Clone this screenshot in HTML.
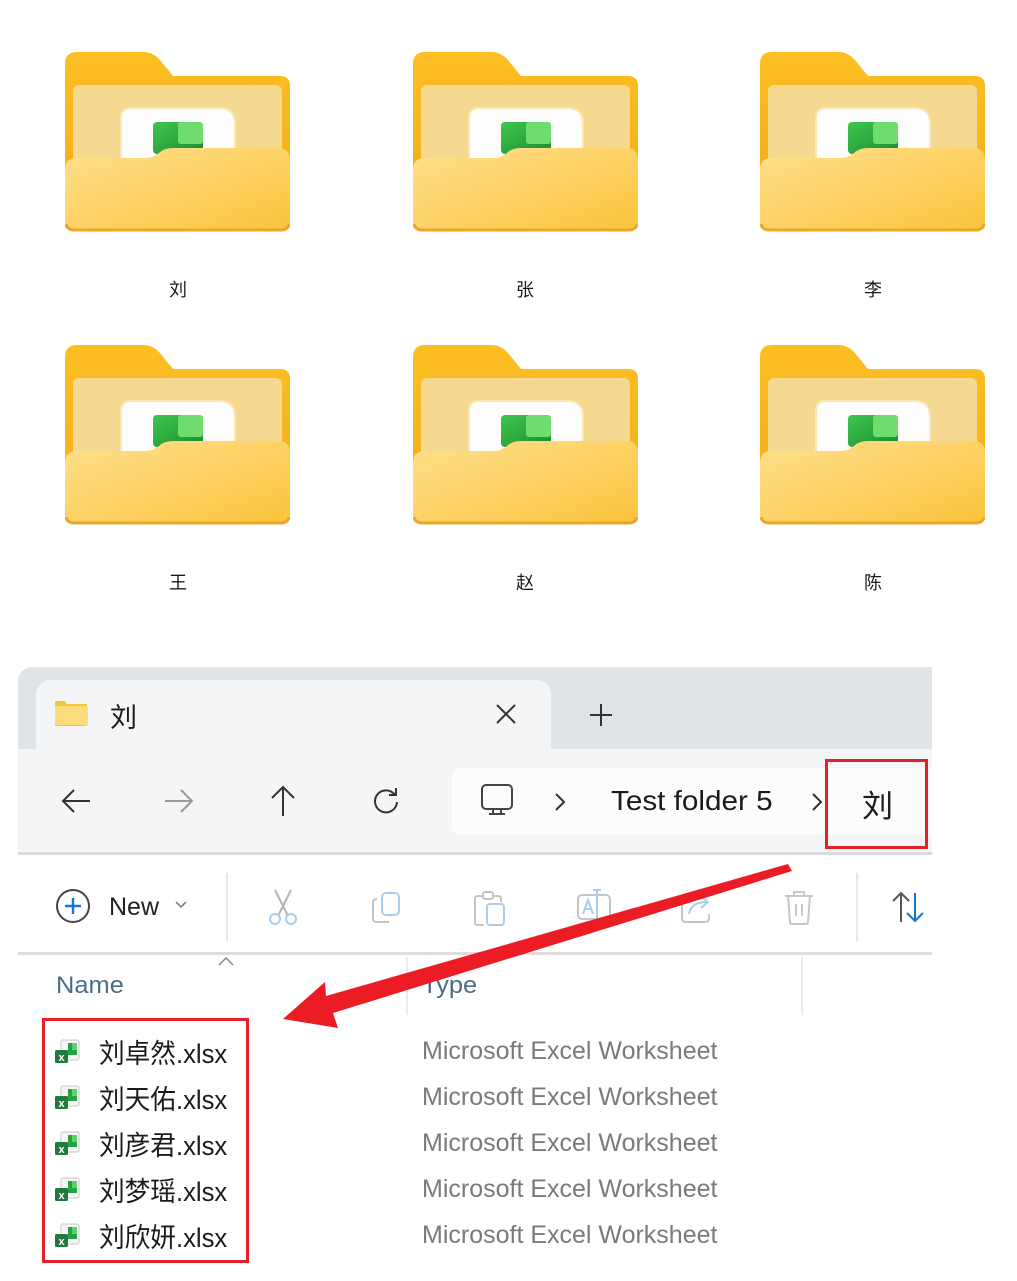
<!DOCTYPE html>
<html><head><meta charset="utf-8"><style>
*{margin:0;padding:0;box-sizing:border-box}
body{width:1017px;height:1281px;background:#fff;position:relative;overflow:hidden;font-family:"Liberation Sans","Noto Sans CJK SC",sans-serif;color:#1b1b1b}
.a{position:absolute}
.lbl{position:absolute;font-size:18px;width:100px;text-align:center;margin-left:-50px}
.sx{display:inline-block;transform-origin:left center;white-space:nowrap}
.type{position:absolute;left:422px;font-size:25px;color:#7a7a7a}
</style></head><body>
<svg width="0" height="0" style="position:absolute"><defs>
<linearGradient id="fb" x1="0" y1="0" x2="0" y2="1"><stop offset="0" stop-color="#fcbf22"/><stop offset="1" stop-color="#f2a91a"/></linearGradient>
<linearGradient id="ff" x1="0" y1="0" x2="1" y2="1"><stop offset="0" stop-color="#ffe08e"/><stop offset="1" stop-color="#fcc43c"/></linearGradient>
<linearGradient id="gr" x1="0" y1="0" x2="1" y2="1"><stop offset="0" stop-color="#3fc74f"/><stop offset="1" stop-color="#1d8a2f"/></linearGradient>
<g id="folder">
<path d="M0,12 Q0,0 12,0 H78 Q88,0 95,8 L108,24 H215 Q225,24 225,34 V168 Q225,178 215,178 H10 Q0,178 0,168 Z" fill="url(#fb)"/>
<rect x="8" y="33" width="209" height="110" rx="6" fill="#f6d991"/>
<path d="M56,66 Q56,56 66,56 H155 Q170,56 170,72 V125 H56 Z" fill="#fdfdfd" stroke="#fbe7b4" stroke-width="2"/>
<rect x="88" y="70" width="50" height="32" rx="4" fill="url(#gr)"/>
<rect x="113" y="70" width="25" height="22" rx="3" fill="#6fdc6e"/>
<path d="M0,118 Q0,106 12,106 H80 Q88,106 94,101 Q99,96 108,96 H213 Q225,96 225,108 V168 Q225,178 213,178 H12 Q0,178 0,168 Z" fill="url(#ff)"/>
<path d="M1,172 Q2,178 10,178 H215 Q223,178 224,172" stroke="#e9a82a" stroke-width="3" fill="none"/>
</g>
<g id="xl">
<rect x="6" y="1" width="18" height="20" rx="2" fill="#f6f6f6" stroke="#c8c8c8"/>
<rect x="13" y="4" width="9" height="12" fill="#24a344"/><rect x="17" y="4" width="5" height="7" fill="#5fd06a"/>
<rect x="0" y="11" width="13" height="13" rx="1.5" fill="#1f7a3b"/>
<text x="6.5" y="22" font-size="11" fill="#fff" text-anchor="middle" font-family="Liberation Sans" font-weight="bold">x</text>
</g>
</defs></svg>

<svg class="a" style="left:65px;top:52px" width="225" height="180"><use href="#folder"/></svg>
<svg class="a" style="left:413px;top:52px" width="225" height="180"><use href="#folder"/></svg>
<svg class="a" style="left:760px;top:52px" width="225" height="180"><use href="#folder"/></svg>
<svg class="a" style="left:65px;top:345px" width="225" height="180"><use href="#folder"/></svg>
<svg class="a" style="left:413px;top:345px" width="225" height="180"><use href="#folder"/></svg>
<svg class="a" style="left:760px;top:345px" width="225" height="180"><use href="#folder"/></svg>
<div class="lbl" style="left:178px;top:276px">刘</div>
<div class="lbl" style="left:525px;top:276px">张</div>
<div class="lbl" style="left:873px;top:276px">李</div>
<div class="lbl" style="left:178px;top:569px">王</div>
<div class="lbl" style="left:525px;top:569px">赵</div>
<div class="lbl" style="left:873px;top:569px">陈</div>

<!-- explorer -->
<div class="a" style="left:18px;top:667px;width:914px;height:82px;background:#dfe4e8;border-top-left-radius:14px"></div>
<div class="a" style="left:36px;top:680px;width:515px;height:70px;background:#f3f5f7;border-radius:14px 14px 0 0"></div>
<svg class="a" style="left:55px;top:700px" width="34" height="26"><path d="M0,3 Q0,1 2,1 H10 L12,4 H32 V26 H0 Z" fill="#f8c33c"/><rect x="0" y="6" width="33" height="19" fill="#fddc7c"/></svg>
<div class="a" style="left:110px;top:696px;font-size:27px">刘</div>
<svg class="a" style="left:495px;top:703px" width="22" height="22"><path d="M2,2 L20,20 M20,2 L2,20" stroke="#333" stroke-width="2"/></svg>
<svg class="a" style="left:589px;top:703px" width="24" height="24"><path d="M12,1 V23 M1,12 H23" stroke="#333" stroke-width="2"/></svg>
<div class="a" style="left:18px;top:749px;width:914px;height:104px;background:#f3f5f7"></div>
<div class="a" style="left:18px;top:852px;width:914px;height:3px;background:#d8dcdf"></div>
<svg class="a" style="left:60px;top:785px" width="32" height="32"><path d="M30,16 H3 M14,5 L3,16 L14,27" stroke="#333" stroke-width="2" fill="none"/></svg>
<svg class="a" style="left:163px;top:785px" width="32" height="32"><path d="M2,16 H29 M18,5 L29,16 L18,27" stroke="#9a9a9a" stroke-width="2" fill="none"/></svg>
<svg class="a" style="left:267px;top:784px" width="32" height="34"><path d="M16,32 V3 M5,14 L16,3 L27,14" stroke="#333" stroke-width="2" fill="none"/></svg>
<svg class="a" style="left:370px;top:785px" width="32" height="32"><path d="M25,10 A11,11 0 1 0 27,17 M26,3 V10 H19" stroke="#333" stroke-width="2" fill="none"/></svg>
<div class="a" style="left:452px;top:768px;width:480px;height:67px;background:#fbfcfc;border-radius:8px 0 0 8px"></div>
<svg class="a" style="left:479px;top:783px" width="36" height="36"><rect x="3" y="2" width="30" height="24" rx="4" stroke="#444" stroke-width="2" fill="none"/><path d="M14,26 V31 M22,26 V31 M10,31 H26" stroke="#444" stroke-width="2"/></svg>
<svg class="a" style="left:553px;top:792px" width="14" height="20"><path d="M3,2 L11,10 L3,18" stroke="#333" stroke-width="2" fill="none"/></svg>
<div class="a" style="left:611px;top:785px;font-size:28px"><span class="sx" style="transform:scaleX(1.06)">Test folder 5</span></div>
<svg class="a" style="left:810px;top:792px" width="14" height="20"><path d="M3,2 L11,10 L3,18" stroke="#333" stroke-width="2" fill="none"/></svg>
<div class="a" style="left:862px;top:781px;font-size:31px">刘</div>
<div class="a" style="left:825px;top:759px;width:103px;height:90px;border:3px solid #e4212b"></div>

<!-- toolbar -->
<svg class="a" style="left:55px;top:888px" width="36" height="36"><circle cx="18" cy="18" r="16" stroke="#444" stroke-width="2" fill="none"/><path d="M18,10 V26 M10,18 H26" stroke="#1a73d1" stroke-width="2.4"/></svg>
<div class="a" style="left:109px;top:893px;font-size:25px;color:#222">New</div>
<svg class="a" style="left:174px;top:900px" width="14" height="10"><path d="M2,2 L7,7 L12,2" stroke="#777" stroke-width="1.5" fill="none"/></svg>
<div class="a" style="left:226px;top:873px;width:2px;height:68px;background:#e8e8e8"></div>
<svg class="a" style="left:266px;top:888px" width="34" height="40"><path d="M9,2 L22,28 M25,2 L12,28" stroke="#b4b4b4" stroke-width="2"/><circle cx="9" cy="31" r="5" stroke="#a8cdf0" stroke-width="2" fill="none"/><circle cx="25" cy="31" r="5" stroke="#a8cdf0" stroke-width="2" fill="none"/></svg>
<svg class="a" style="left:370px;top:891px" width="34" height="34"><path d="M7,8 Q3,8 3,12 V28 Q3,31 7,31 H19" stroke="#c4c4c4" stroke-width="2" fill="none"/><rect x="12" y="2" width="17" height="22" rx="4" stroke="#a8cdf0" stroke-width="2" fill="none"/></svg>
<svg class="a" style="left:472px;top:890px" width="36" height="38"><path d="M12,6 H6 Q3,6 3,9 V33 Q3,35 6,35 H12 M20,6 H26 Q29,6 29,9 V12" stroke="#c4c4c4" stroke-width="2" fill="none"/><rect x="11" y="2" width="10" height="7" rx="2" stroke="#c4c4c4" stroke-width="2" fill="none"/><rect x="15" y="14" width="17" height="21" rx="3" stroke="#a8cdf0" stroke-width="2" fill="none"/></svg>
<svg class="a" style="left:575px;top:888px" width="40" height="40"><rect x="3" y="7" width="32" height="24" rx="4" stroke="#c4c4c4" stroke-width="2" fill="none"/><path d="M8,26 L13,12 L18,26 M10,21 H16 M22,2 V34 M18,2 H26 M18,34 H26" stroke="#a8cdf0" stroke-width="2" fill="none"/></svg>
<svg class="a" style="left:679px;top:890px" width="40" height="36"><path d="M12,8 H7 Q3,8 3,12 V28 Q3,32 7,32 H26 Q30,32 30,28 V24" stroke="#c4c4c4" stroke-width="2" fill="none"/><path d="M10,24 Q12,12 28,12 M22,6 L29,12 L22,18" stroke="#a8cdf0" stroke-width="2" fill="none"/></svg>
<svg class="a" style="left:782px;top:888px" width="34" height="40"><path d="M3,8 H31 M12,8 V4 H22 V8 M6,8 L8,34 Q8,36 10,36 H24 Q26,36 26,34 L28,8 M14,16 V28 M20,16 V28" stroke="#c8c8c8" stroke-width="2" fill="none"/></svg>
<div class="a" style="left:856px;top:873px;width:2px;height:68px;background:#e8e8e8"></div>
<svg class="a" style="left:891px;top:890px" width="40" height="34"><path d="M10,32 V3 M2,11 L10,3 L18,11" stroke="#555" stroke-width="2" fill="none"/><path d="M24,3 V31 M16,23 L24,31 L32,23" stroke="#1a73d1" stroke-width="2" fill="none"/></svg>
<div class="a" style="left:18px;top:952px;width:914px;height:3px;background:#dcdcdc"></div>

<!-- header -->
<svg class="a" style="left:217px;top:955px" width="18" height="12"><path d="M2,10 L9,3 L16,10" stroke="#888" stroke-width="1.5" fill="none"/></svg>
<div class="a" style="left:56px;top:972px;font-size:24px;color:#4b6d8a"><span class="sx" style="transform:scaleX(1.06)">Name</span></div>
<div class="a" style="left:406px;top:957px;width:2px;height:58px;background:#ececec"></div>
<div class="a" style="left:801px;top:957px;width:2px;height:58px;background:#ececec"></div>
<div class="a" style="left:422px;top:972px;font-size:24px;color:#4b6d8a"><span class="sx" style="transform:scaleX(1.06)">Type</span></div>

<!-- rows -->
<svg class="a" style="left:55px;top:1039px" width="26" height="26"><use href="#xl"/></svg>
<div class="a" style="left:99px;top:1032px;font-size:27px"><span class="sx" style="transform:scaleX(.95)">刘卓然.xlsx</span></div>
<div class="type" style="top:1037px">Microsoft Excel Worksheet</div>
<svg class="a" style="left:55px;top:1085px" width="26" height="26"><use href="#xl"/></svg>
<div class="a" style="left:99px;top:1078px;font-size:27px"><span class="sx" style="transform:scaleX(.95)">刘天佑.xlsx</span></div>
<div class="type" style="top:1083px">Microsoft Excel Worksheet</div>
<svg class="a" style="left:55px;top:1131px" width="26" height="26"><use href="#xl"/></svg>
<div class="a" style="left:99px;top:1124px;font-size:27px"><span class="sx" style="transform:scaleX(.95)">刘彦君.xlsx</span></div>
<div class="type" style="top:1129px">Microsoft Excel Worksheet</div>
<svg class="a" style="left:55px;top:1177px" width="26" height="26"><use href="#xl"/></svg>
<div class="a" style="left:99px;top:1170px;font-size:27px"><span class="sx" style="transform:scaleX(.95)">刘梦瑶.xlsx</span></div>
<div class="type" style="top:1175px">Microsoft Excel Worksheet</div>
<svg class="a" style="left:55px;top:1223px" width="26" height="26"><use href="#xl"/></svg>
<div class="a" style="left:99px;top:1216px;font-size:27px"><span class="sx" style="transform:scaleX(.95)">刘欣妍.xlsx</span></div>
<div class="type" style="top:1221px">Microsoft Excel Worksheet</div>

<div class="a" style="left:42px;top:1018px;width:207px;height:245px;border:3px solid #e4212b"></div>
<svg class="a" style="left:0;top:0" width="1017" height="1281"><polygon points="283,1019 325,982 326,996 788,864 792,871 333,1013 338,1028" fill="#ec1c24"/></svg>
</body></html>
